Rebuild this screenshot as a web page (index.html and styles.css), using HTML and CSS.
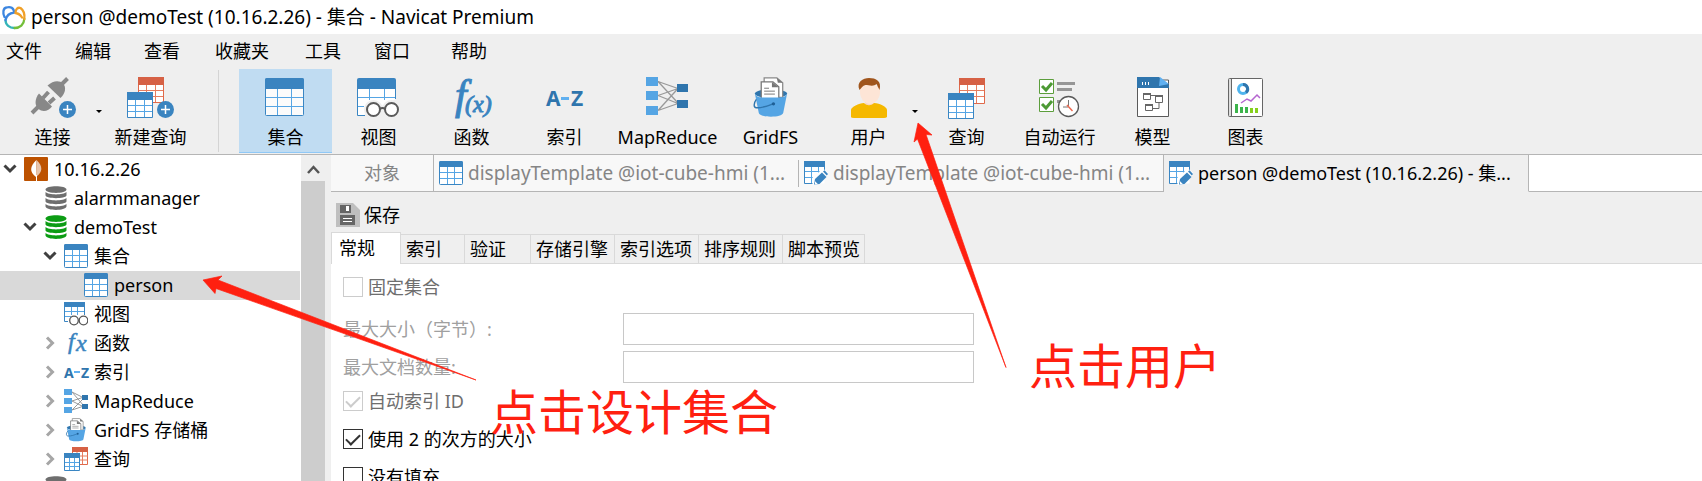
FILE: index.html
```html
<!DOCTYPE html>
<html lang="zh-CN">
<head>
<meta charset="utf-8">
<title>person @demoTest (10.16.2.26) - 集合 - Navicat Premium</title>
<link rel="stylesheet" href="styles.css">
</head>
<body>
<svg class="sprite" aria-hidden="true">
  <symbol id="table" viewBox="0 0 24 24">
    <rect x="0.5" y="0.5" width="23" height="23" rx="1" fill="#fff" stroke="#3a86c3"/>
    <path d="M0 1.500Q0 0 1.500 0h21Q24 0 24 1.500V6H0z" fill="#3a84c0"/>
    <path d="M1 11.500h22M1 17.500h22M8.500 6v17M15.500 6v17" stroke="#55a5e4" fill="none"/>
  </symbol>
  <symbol id="table-view" viewBox="0 0 24 24">
    <path d="M.5.5h20v16H4v3H.5z" fill="#fff"/>
    <path d="M.5 4v15.500H4M20.500 4v9" stroke="#3a86c3" fill="none"/>
    <path d="M0 0h21v5H0z" fill="#3a84c0"/>
    <path d="M1 9.500h19M1 14.500h6M7.500 5v8M13.500 5v8" stroke="#55a5e4" fill="none"/>
    <circle cx="10" cy="18.500" r="4.300" fill="#fff" stroke="#555" stroke-width="1.300"/>
    <circle cx="19.500" cy="18.500" r="4.300" fill="#fff" stroke="#555" stroke-width="1.300"/>
  </symbol>
  <symbol id="table-edit" viewBox="0 0 24 24">
    <path d="M.5.5h20v22H.5z" fill="#fff"/>
    <path d="M.5 5v17.500H9M20.500 5v6" stroke="#3a86c3" fill="none"/>
    <path d="M0 0h21v6H0z" fill="#3a84c0"/>
    <path d="M1 10.500h17M1 16.500h11M7.500 6v16M14.500 6v8" stroke="#55a5e4" fill="none"/>
    <path d="M8.500 24.500v-8L19 7.500l6 5L13.500 24z" fill="#fff"/>
    <path d="M10 23.500l1-5.500L18 11.500l4.500 4.500-7 7z" fill="#3a84c0"/>
    <path d="M19 10.500l1.500-1.200 3.500 3.700-1.200 1.500z" fill="#3a84c0"/>
    <path d="M10.800 20l3 3-2.800.300z" fill="#fff"/>
  </symbol>
  <symbol id="db" viewBox="0 0 21 24">
    <path d="M0 3.500C0-1 21-1 21 3.500S0 8 0 3.500z"/>
    <path d="M0 6c3 3.200 18 3.200 21 0v3.500C20 13 1 13 0 9.500zM0 12c3 3.200 18 3.200 21 0v3.500c-1 3.500-20 3.500-21 0zM0 18c3 3.200 18 3.200 21 0v2.500c-1 4.500-20 4.500-21 0z"/>
  </symbol>
  <symbol id="queries" viewBox="0 0 24 24">
    <path d="M8.500.5h15v17h-15z" fill="#fff" stroke="#e0694a"/>
    <path d="M8 0h16v5H8z" fill="#d66145"/>
    <path d="M13 5v12M18.500 5v12M9 9h15M9 13h15" stroke="#e77e60" fill="none"/>
    <path d="M.5 6.500h15v17H.5z" fill="#fff" stroke="#3a86c3"/>
    <path d="M0 6h16v5H0z" fill="#3a84c0"/>
    <path d="M5.500 11v12M10.500 11v12M1 15.500h14M1 19.500h14" stroke="#55a5e4" fill="none"/>
  </symbol>
  <symbol id="mapreduce" viewBox="0 0 24 24">
    <path d="M8 3l12 6M8 3l12 14M8 12l12-4M8 12l12 6M8 21L20 9M8 21l12-4" stroke="#999" fill="none"/>
    <path d="M0 0h8v6H0zM0 9h8v6H0zM0 18h8v6H0z" fill="#55a5e4"/>
    <path d="M18 6h6v5h-6zM18 15h6v5h-6z" fill="#2f75ad"/>
  </symbol>
  <symbol id="bucket" viewBox="0 0 35 42">
    <ellipse cx="18" cy="17" rx="16.500" ry="4.500" fill="#2f75ad"/>
    <path d="M11 1h13l6 5v15H11z" fill="#fff" stroke="#8a8a8a" stroke-width="1.300"/>
    <path d="M24 1l6 5h-5z" fill="#777"/>
    <path d="M8 5h12l6 5v13H8z" fill="#fff" stroke="#777" stroke-width="1.300"/>
    <path d="M19 5l7 5.500h-7z" fill="#777"/>
    <path d="M11 11.500h5M11 14.500h11M11 17.500h11" stroke="#777"/>
    <path d="M1.500 17c2 4 5 4 9 4h15c4 0 7 0 9-4l-4 20c-1 5-24 5-25 0z" fill="#55a5e4"/>
    <path d="M3 23c-3 4-3 8 0 8.500 6 .5 12-2 17-4" fill="none" stroke="#2f75ad" stroke-width="1.400"/>
    <circle cx="20.500" cy="27.500" r="1.700" fill="#1e5f96"/>
  </symbol>
  <symbol id="down" viewBox="0 0 14 10"><path d="M1.500 1.500L7 7l5.500-5.500" fill="none" stroke="#404040" stroke-width="3"/></symbol>
  <symbol id="right" viewBox="0 0 10 14"><path d="M2 1.500L7.500 7 2 12.500" fill="none" stroke="#a6a6a6" stroke-width="3"/></symbol>
</svg>

<header class="titlebar">
  <svg class="icon" viewBox="0 0 24 24" fill="none" stroke-width="2.300" stroke-linecap="round">
    <path d="M3.500 15C3.500 20 7.500 23 12.500 23" stroke="#35b5b8"/>
    <path d="M12.500 23C18 23 22 19.500 22.300 14" stroke="#73bf3a"/>
    <path d="M2.500 12C.5 8 1 3 4.500 2.500 8.500 1.200 12 3 12 7.500 8 8 4.500 11 3.500 15" stroke="#3c86e0"/>
    <path d="M22.300 14C22.800 10 22 5.500 18.500 3 15.500 2 13.500 4.500 13.500 8c3 .3 5 2 6.500 4.500" stroke="#f0a028"/>
  </svg>
  <h1>person @demoTest (10.16.2.26) - 集合 - Navicat Premium</h1>
</header>

<nav class="menubar">
  <button>文件</button><button>编辑</button><button>查看</button><button>收藏夹</button><button>工具</button><button>窗口</button><button>帮助</button>
</nav>

<div class="toolbar">
  <button class="tool split">
    <svg class="art" viewBox="0 0 47 48">
      <path d="M10 18.500L23 31.500c-3 4.500-9.500 6-13.500 2.500-4-3.500-4-10 .5-15.500z" fill="#888"/>
      <path d="M18.500 10.500L31.500 23c5-4.500 6-11 2.500-14.500S24 5.500 18.500 10.500z" fill="#888"/>
      <path d="M9 32l-6 6M33 9l5.500-5.500M14 23l5.500-6M20 28l5.500-5" stroke="#888" stroke-width="4"/>
      <circle cx="38.500" cy="34.500" r="8.500" fill="#3a84c0"/><path d="M38.500 30v9M34 34.500h9" stroke="#fff" stroke-width="1.500"/>
    </svg><span>连接</span><i class="caret"></i>
  </button>
  <button class="tool">
    <svg class="art" viewBox="0 0 47 48">
      <path d="M11.500 3h25v24.500h-25z" fill="#fff" stroke="#e0694a"/><path d="M11 2h26v8H11z" fill="#d66145"/><path d="M19.500 10v17M28.500 10v17M12 15.500h24M12 21.500h24" stroke="#e77e60"/>
      <path d="M.5 18h25v24.500H.5z" fill="#fff" stroke="#3a86c3"/><path d="M0 17h26v8H0z" fill="#3a84c0"/><path d="M8.500 25v17M17.500 25v17M1 30.500h24M1 36.500h24" stroke="#55a5e4"/>
      <circle cx="38.500" cy="34.500" r="8.500" fill="#3a84c0"/><path d="M38.500 30v9M34 34.500h9" stroke="#fff" stroke-width="1.500"/>
    </svg><span>新建查询</span>
  </button>
  <span class="divider"></span>
  <button class="tool selected">
    <svg class="art" viewBox="0 0 47 48">
      <rect x="3.500" y="3.500" width="38" height="37" rx="1" fill="#fbfbfb" stroke="#3a86c3"/><path d="M3 5q0-2 2-2h35q2 0 2 2v9H3z" fill="#3a84c0"/><path d="M15.500 14v26M29.500 14v26M4 22.500h37M4 31.500h37" stroke="#55a5e4"/>
    </svg><span>集合</span>
  </button>
  <button class="tool">
    <svg class="art" viewBox="0 0 47 48">
      <path d="M2 12h39v12L9 40H2z" fill="#fff"/><path d="M2.500 12v28.500H10M40.500 12v12" fill="none" stroke="#3a86c3"/><path d="M2 5q0-2 2-2h35q2 0 2 2v9H2z" fill="#3a84c0"/><path d="M14.500 14v11M29.500 14v11M3 22.500h37M3 31.500h6" stroke="#55a5e4"/>
      <g fill="#fff" stroke="#efefef" stroke-width="5"><circle cx="18.500" cy="34.500" r="7"/><circle cx="36.500" cy="34.500" r="7"/></g>
      <g fill="#fff" stroke="#5a5a5a" stroke-width="2"><circle cx="18.500" cy="34.500" r="6.500"/><circle cx="36.500" cy="34.500" r="6.500"/><path d="M25 34q2.500-2 5 0" fill="none"/></g>
    </svg><span>视图</span>
  </button>
  <button class="tool">
    <svg class="art" viewBox="0 0 47 48"><text class="serif thick" x="7" y="34" font-size="42">f</text><text class="serif thick" x="17" y="37" font-size="24">(x)</text></svg><span>函数</span>
  </button>
  <button class="tool">
    <svg class="art" viewBox="0 0 47 48"><text class="az" x="5" y="31" font-size="21">A</text><path d="M20 22h8v3h-8z" fill="#60b0f0"/><text class="az" x="30" y="31" font-size="21">Z</text></svg><span>索引</span>
  </button>
  <button class="tool wide">
    <svg class="art" viewBox="0 0 47 48">
      <path d="M14 6.500l20 7M14 6.500L34 28M14 20.500l20-7M14 20.500l20 8M14 35.500l20-22M14 35.500l20-7" stroke="#999" stroke-width="1.300"/>
      <path d="M2 2h12v9H2zM2 16h12v9H2zM2 31h12v9H2z" fill="#55a5e4"/><path d="M33 9h11v8H33zM33 25h11v8H33z" fill="#2f75ad"/>
    </svg><span>MapReduce</span>
  </button>
  <button class="tool">
    <svg class="art" viewBox="0 0 47 48"><use href="#bucket" x="6" y="2" width="35" height="41"/></svg><span>GridFS</span>
  </button>
  <button class="tool split">
    <svg class="art" viewBox="0 0 47 48">
      <path d="M20 22h9v8h-9z" fill="#f7d8c6"/>
      <path d="M6 42v-7c0-3 8-7 13-7 3 3 7 3 10 0 6 0 13 4 13 7v7q-1 1-3 1H9q-3 0-3-1z" fill="#f5b800"/>
      <path d="M15 12q9-5 20 0v5c0 7-5 12-10 12s-10-5-10-12z" fill="#fde5d6"/>
      <path d="M14.500 15C11 7 18 3 24 3c7 0 13 3 10.500 12-1.500-3-2-4-3-6-3 3-8 1-11 1-3 .5-4 3-6 5z" fill="#a0551c"/>
    </svg><span>用户</span><i class="caret"></i>
  </button>
  <button class="tool">
    <svg class="art" viewBox="0 0 47 48">
      <path d="M16.500 3.500h25v25h-25z" fill="#fff" stroke="#e0694a"/><path d="M16 3h26v7H16z" fill="#d66145"/><path d="M24.500 10v18M33.500 10v18M17 15.500h24M17 21.500h24" stroke="#e77e60"/>
      <path d="M5.500 18.500h25v25h-25z" fill="#fff" stroke="#3a86c3"/><path d="M5 18h26v7H5z" fill="#3a84c0"/><path d="M13.500 25v18M22.500 25v18M6 31.500h24M6 37.500h24" stroke="#55a5e4"/>
    </svg><span>查询</span>
  </button>
  <button class="tool">
    <svg class="art" viewBox="0 0 47 48">
      <path d="M3.500 4.500h14v14h-14zM3.500 22.500h14v14h-14z" fill="#fff" stroke="#5c9e3c"/>
      <path d="M6 11l4 4 6-7M6 29l4 4 6-7" fill="none" stroke="#4d9a35" stroke-width="3"/>
      <path d="M21 7h18v3H21zM21 13h15v3H21zM21 25h4v3h-4z" fill="#969696"/>
      <circle cx="32.500" cy="31.500" r="10" fill="#fff" stroke="#5a5a5a" stroke-width="1.300"/><path d="M32.500 25v7H27" fill="none" stroke="#777"/><path d="M31 30l5.500 6" stroke="#ed6a50" stroke-width="1.500"/>
    </svg><span>自动运行</span>
  </button>
  <button class="tool">
    <svg class="art" viewBox="0 0 47 48">
      <path d="M8.500 5h31v36.500h-31z" fill="#fff" stroke="#5a5a5a"/><path d="M8 2h22l10 8v3H8z" fill="#2f75ad"/><path d="M31 2l9 7-10 2z" fill="#60b0f0"/><path d="M13.500 7v3M16.500 7v3M19.500 7v3" stroke="#fff"/>
      <path d="M14.500 18.500h7v6h-7zM26.500 20.500h7v7h-7zM16.500 29.500h7v6h-7z M22 20.500h4M24 33.500h6V28" fill="none" stroke="#666"/><path d="M14 18h8v2h-8zM26 20h8v2h-8zM16 29h8v2h-8z" fill="#666"/>
    </svg><span>模型</span>
  </button>
  <button class="tool">
    <svg class="art" viewBox="0 0 47 48">
      <rect x="6.500" y="3.500" width="34" height="38" rx="1" fill="#fff" stroke="#666"/><path d="M7 4h2v37H7z" fill="#ddd"/><path d="M9.500 4v37" stroke="#666"/>
      <circle cx="21" cy="14" r="4.500" fill="none" stroke="#4fb4ee" stroke-width="3"/><path d="M21 9.500a4.500 4.500 0 0 1 3 8" fill="none" stroke="#2f75ad" stroke-width="3"/>
      <path d="M19 28l6-4 4 2 6-6 3 3" fill="none" stroke="#b565d0" stroke-width="1.500"/>
      <path d="M13 29h3v9h-3zM18 32h3v6h-3zM23 32h3v6h-3z" fill="#3cb44b"/><path d="M28 33h3v5h-3zM33 33h3v5h-3z" fill="#86d01c"/>
    </svg><span>图表</span>
  </button>
</div>

<main class="workspace">
  <aside class="sidebar">
    <ul class="tree">
      <li class="l0"><svg class="chev"><use href="#down"/></svg><svg class="icon" viewBox="0 0 24 24"><rect width="24" height="24" rx="1" fill="#bd5200"/><path d="M12.500 3C6 9 5 15 12 20z" fill="#fff"/><path d="M12.500 3C19 9 19 15 12 20z" fill="#e7c5ac"/><path d="M12.500 18v6" stroke="#fff"/></svg>10.16.2.26</li>
      <li class="l1"><i class="chev"></i><svg class="icon gray"><use href="#db"/></svg>alarmmanager</li>
      <li class="l1"><svg class="chev"><use href="#down"/></svg><svg class="icon green"><use href="#db"/></svg>demoTest</li>
      <li class="l2"><svg class="chev"><use href="#down"/></svg><svg class="icon"><use href="#table"/></svg>集合</li>
      <li class="l3 current"><i class="chev"></i><svg class="icon"><use href="#table"/></svg>person</li>
      <li class="l2"><i class="chev"></i><svg class="icon"><use href="#table-view"/></svg>视图</li>
      <li class="l2"><svg class="chev"><use href="#right"/></svg><svg class="icon" viewBox="0 0 24 24"><text class="serif thin" x="4" y="18" font-size="24">f</text><text class="serif thin" x="12" y="20" font-size="24">x</text></svg>函数</li>
      <li class="l2"><svg class="chev"><use href="#right"/></svg><svg class="icon" viewBox="0 0 24 24"><text class="az" x="0" y="18" font-size="14">A</text><path d="M10 11h6v2h-6z" fill="#60b0f0"/><text class="az" x="17" y="18" font-size="14">Z</text></svg>索引</li>
      <li class="l2"><svg class="chev"><use href="#right"/></svg><svg class="icon"><use href="#mapreduce"/></svg>MapReduce</li>
      <li class="l2"><svg class="chev"><use href="#right"/></svg><svg class="icon"><use href="#bucket"/></svg>GridFS 存储桶</li>
      <li class="l2"><svg class="chev"><use href="#right"/></svg><svg class="icon"><use href="#queries"/></svg>查询</li>
      <li class="l1"><i class="chev"></i><svg class="icon gray"><use href="#db"/></svg></li>
    </ul>
    <div class="scrollbar">
      <svg class="up" viewBox="0 0 24 26"><path d="M7 18l5.500-6 5.500 6" fill="none" stroke="#555" stroke-width="2.500"/></svg>
      <div class="thumb"></div>
    </div>
  </aside>

  <section class="editor">
    <div class="doc-tabs">
      <button class="doc home">对象</button>
      <button class="doc next"><svg class="icon"><use href="#table"/></svg>displayTemplate @iot-cube-hmi (1...</button>
      <button class="doc"><svg class="icon"><use href="#table-edit"/></svg>displayTemplate @iot-cube-hmi (1...</button>
      <button class="doc open"><svg class="icon"><use href="#table-edit"/></svg>person @demoTest (10.16.2.26) - 集...</button>
      <span class="rest"></span>
    </div>
    <div class="actions">
      <button><svg class="icon" viewBox="0 0 24 24"><path d="M0 0h17l7 7v17H0z" fill="#bfbfbf"/><path d="M4 2h11v8H4zM4 12h15v10H4z" fill="#666"/><path d="M10 3h3v5h-3z" fill="#fff"/><path d="M7 15.500h9M7 18.500h9" stroke="#fff"/></svg>保存</button>
    </div>
    <div class="sub-tabs">
      <button class="active w70">常规</button><button class="w64">索引</button><button class="w66">验证</button><button class="w84">存储引擎</button><button class="w84">索引选项</button><button class="w84">排序规则</button><button class="w82">脚本预览</button>
    </div>
    <form class="form">
      <label class="check off"><input type="checkbox" disabled>固定集合</label>
      <div class="field"><label for="size">最大大小（字节）:</label><input id="size" type="text" disabled></div>
      <div class="field"><label for="count">最大文档数量:</label><input id="count" type="text" disabled></div>
      <label class="check off"><input type="checkbox" checked disabled>自动索引 ID</label>
      <label class="check"><input type="checkbox" checked>使用 2 的次方的大小</label>
      <label class="check"><input type="checkbox">没有填充</label>
    </form>
  </section>
</main>

<svg class="arrows" aria-hidden="true">
  <path d="M203 280l19-4-4 4L476 380 216 288.500l-1 5z"/>
  <path d="M918 123l14 12-6-.5L1006 367.500 917.500 139l-3.500 3z"/>
</svg>
<p class="note design">点击设计集合</p>
<p class="note user">点击用户</p>
</body>
</html>
```
FILE: styles.css
```css
* { box-sizing: border-box; }
body {
  margin: 0;
  height: 100vh;
  overflow: hidden;
  position: relative;
  display: flex;
  flex-direction: column;
  background: #efefef;
  color: #000;
  font: 18px/28px "Noto Sans", "Noto Sans CJK SC", sans-serif;
}
button {
  border: 0;
  padding: 0;
  background: none;
  color: inherit;
  font: inherit;
  white-space: nowrap;
}
.sprite { position: absolute; width: 0; height: 0; }
.icon { width: 24px; height: 24px; flex: none; overflow: visible; }
.serif { font-family: "Liberation Serif", serif; font-style: italic; fill: #3a84c0; stroke: #3a84c0; }
.thick { stroke-width: 1px; }
.thin { stroke-width: 0.5px; }
.az { font-family: "Noto Sans", sans-serif; font-weight: bold; fill: #2f75ad; }

.titlebar { display: flex; align-items: center; gap: 5px; height: 34px; flex: none; padding-left: 2px; background: #fff; }
.titlebar h1 { margin: 0; font-size: 19px; font-weight: 400; }

.menubar {
  display: grid;
  grid-template-columns: 69px 69px 71px 90px 69px 77px auto;
  justify-content: start;
  justify-items: start;
  align-items: center;
  height: 35px;
  flex: none;
  padding: 0 0 2px 6px;
}

.toolbar { display: flex; flex: none; height: 86px; padding: 0 0 1px 1px; border-bottom: 1px solid #b5b5b5; }
.tool { position: relative; display: flex; flex-direction: column; align-items: center; width: 93px; height: 84px; padding-top: 6px; flex: none; line-height: 28px; }
.tool.split { width: 103px; }
.tool.wide { width: 113px; }
.tool.selected { background: #c0dcf2; border-bottom: 1px solid #90c8f6; }
.art { width: 47px; height: 48px; flex: none; overflow: visible; }
.caret { position: absolute; right: 2px; top: 41px; border: 3px solid transparent; border-top-color: #000; border-bottom: 0; }
.divider { width: 1px; height: 82px; margin: 1px 20px 0 21px; background: #d4d4d4; }

.workspace { display: flex; flex: 1; min-height: 0; }
.sidebar { display: flex; width: 331px; flex: none; overflow: hidden; background: #fff; }
.tree { flex: 1; margin: 0; padding: 0; list-style: none; }
.tree li { display: flex; align-items: center; height: 29px; gap: 6px; padding: 0 0 1px 3px; white-space: nowrap; }
.tree .l1 { padding-left: 23px; }
.tree .l2 { padding-left: 43px; }
.tree .l3 { padding-left: 63px; }
.tree .current { background: #d9d9d9; margin-right: 1px; }
.chev { width: 14px; height: 14px; flex: none; }
.tree li .icon { margin-left: 1px; }
.gray { fill: #6e6e6e; }
.green { fill: #0c9c14; }
.scrollbar { display: flex; flex-direction: column; width: 30px; padding-right: 6px; background: #efefef; }
.up { width: 24px; height: 26px; flex: none; }
.thumb { flex: 1; background: #cdcdcd; }

.editor { display: flex; flex-direction: column; flex: 1; min-width: 0; }
.doc-tabs { display: flex; height: 37px; flex: none; }
.doc { position: relative; display: flex; align-items: center; gap: 5px; width: 365px; padding-left: 5px; background: #f8f8f8; border-right: 1px solid #b5b5b5; border-bottom: 1px solid #b5b5b5; color: #858585; font-size: 19px; }
.doc.home { width: 103px; padding: 0; justify-content: center; font-size: 18px; }
.doc.next { border-right: 0; }
.doc.next::after { content: ""; position: absolute; right: 0; top: 5px; bottom: 4px; width: 1px; background: #b5b5b5; }
.doc.open { background: #efefef; border-bottom-color: #efefef; color: #000; font-size: 18px; }
.rest { flex: 1; background: #fff; border-bottom: 1px solid #b5b5b5; }

.actions { height: 40px; flex: none; padding: 9px 5px; }
.actions button { display: flex; align-items: center; gap: 4px; height: 28px; }

.sub-tabs { display: flex; align-items: flex-end; height: 32px; flex: none; box-shadow: inset 0 -1px #d9d9d9; }
.sub-tabs button { height: 30px; padding-left: 5px; text-align: left; border: 1px solid #d9d9d9; border-left: 0; }
.sub-tabs .active { height: 32px; padding: 0 0 2px 7px; background: #fff; border-left: 1px solid #d9d9d9; border-bottom: 0; }
.w64 { width: 64px; }
.w66 { width: 66px; }
.w70 { width: 70px; }
.w82 { width: 82px; }
.w84 { width: 84px; }

.form { flex: 1; padding: 8px 12px; overflow: hidden; background: #fff; }
.check { display: flex; align-items: center; gap: 5px; height: 30px; margin-bottom: 8px; }
.check.off { color: #6e6e6e; }
.check input { appearance: none; display: grid; place-items: center; width: 20px; height: 20px; margin: 0; border: 1px solid #333; background: #fff; }
.check input:checked::before { content: ""; width: 12px; height: 6px; margin-top: -3px; border: solid #333; border-width: 0 0 2px 2px; rotate: -45deg; }
.check input:disabled, .check input:disabled::before { border-color: #ccc; }
.field { display: grid; grid-template-columns: 280px 351px; align-items: center; height: 38px; color: #a0a0a0; }
.field input { height: 32px; border: 1px solid #c8c8c8; background: #fff; font: inherit; padding: 0 6px; }

.arrows { position: absolute; inset: 0; width: 100%; height: 100%; fill: #ff2010; stroke: #ff2010; stroke-width: 0.7px; pointer-events: none; }
.note { position: absolute; margin: 0; color: #ff2010; font-size: 48px; line-height: 56px; white-space: nowrap; }
.design { left: 490px; top: 384px; }
.user { left: 1029px; top: 338px; }
```
